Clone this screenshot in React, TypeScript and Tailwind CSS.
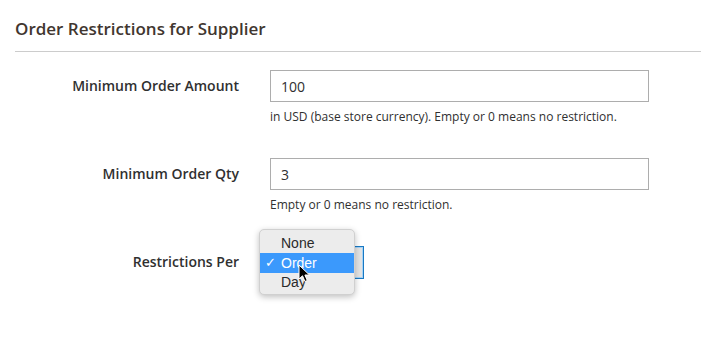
import React from "react";

export default function App() {
  const font = { fontFamily: '"Open Sans", "Liberation Sans", sans-serif' };
  return (
    <div className="w-[701px] h-[345px] bg-white overflow-hidden text-[#303030]" style={font}>
      <div className="pl-[15px] pt-[17px]">
        <h2 className="text-[17px] leading-[24px] font-semibold text-[#41362f]">
          Order Restrictions for Supplier
        </h2>
        <div className="mt-[10px] h-px bg-[#cccccc]" />
      </div>

      <div className="flex flex-col gap-[32px] pt-[18px]">
        <div className="flex items-start">
          <div className="w-[239px] text-right text-[14px] font-semibold leading-[32px]">Minimum Order Amount</div>
          <div className="ml-[31px]">
            <div className="w-[379px] h-[32px] border border-[#adadad] flex items-center px-[10px] text-[14px]">100</div>
            <div className="mt-[6px] text-[12px] leading-[18px]">in USD (base store currency). Empty or 0 means no restriction.</div>
          </div>
        </div>

        <div className="flex items-start">
          <div className="w-[239px] text-right text-[14px] font-semibold leading-[32px]">Minimum Order Qty</div>
          <div className="ml-[31px]">
            <div className="w-[379px] h-[32px] border border-[#adadad] flex items-center px-[10px] text-[14px]">3</div>
            <div className="mt-[6px] text-[12px] leading-[18px]">Empty or 0 means no restriction.</div>
          </div>
        </div>

        <div className="flex items-start">
          <div className="w-[239px] text-right text-[14px] font-semibold leading-[32px]">Restrictions Per</div>
          <div className="ml-[31px] relative">
            <div className="w-[94px] h-[33px] border border-[#1979c3] bg-[#e4e4e4] shadow-[inset_0_0_0_1px_#a6d2f5]" />
            <div
              className="absolute left-[-11px] top-[-17px] w-[96px] h-[66px] rounded-[5px] bg-[#ececec] border border-[#d0d0d0] shadow-[0_2px_6px_rgba(0,0,0,0.25)] pt-[4px]"
              style={{ fontFamily: '"Liberation Sans", "Open Sans", sans-serif' }}
            >
              <div className="h-[19px] leading-[19px] pl-[21px] text-[14px] text-[#2a2a2a]">None</div>
              <div className="h-[20px] leading-[20px] pl-[21px] text-[14px] text-white bg-[#3b99fc] relative">
                <span className="absolute left-[5px] top-0 text-[13px]">✓</span>
                Order
              </div>
              <div className="h-[19px] leading-[19px] pl-[21px] text-[14px] text-[#2a2a2a]">Day</div>
            </div>
            <svg
              className="absolute left-[28px] top-[18px]"
              width="14"
              height="20"
              viewBox="0 0 14 20"
            >
              <path
                d="M1 1 L1 15 L4.5 11.8 L7 17.5 L9.3 16.5 L6.9 11 L11.5 11 Z"
                fill="#000"
                stroke="#fff"
                strokeWidth="1"
                strokeLinejoin="round"
              />
            </svg>
          </div>
        </div>
      </div>
    </div>
  );
}
